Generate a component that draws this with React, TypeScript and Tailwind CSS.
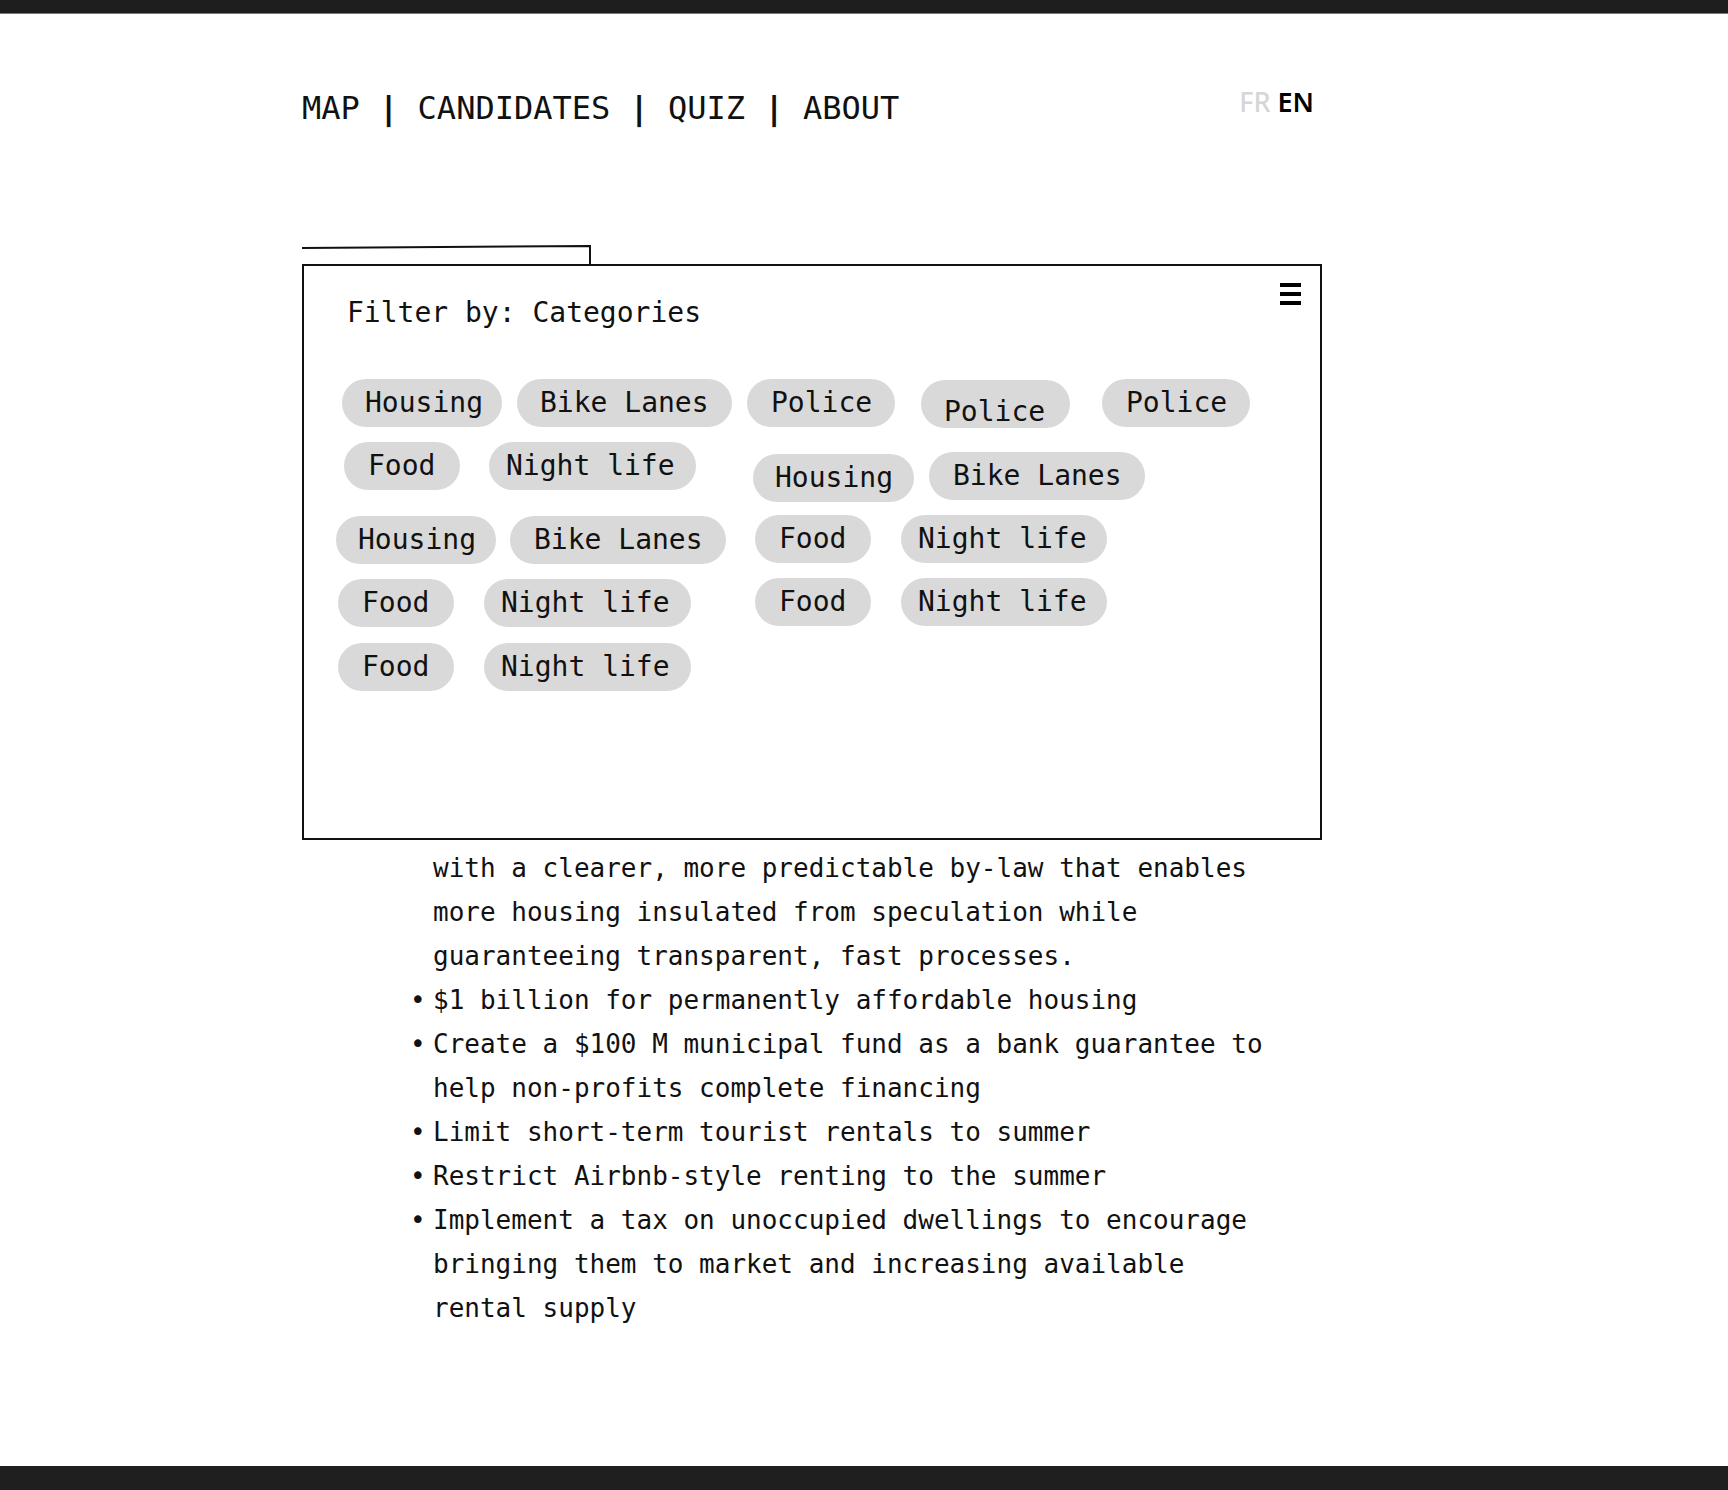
import React from 'react'

type ChipProps = { label: string; w: string; pl?: string; className?: string; low?: boolean }

function Chip({ label, w, pl = 'pl-[23px]', className = '', low = false }: ChipProps) {
  return (
    <div
      className={`h-12 shrink-0 rounded-full bg-[#d9d9d9] text-[28px] text-[#111] whitespace-nowrap ${w} ${pl} ${low ? 'leading-[64px]' : 'leading-[48px]'} ${className}`}
    >
      {label}
    </div>
  )
}

export default function App() {
  const bullets = [
    '$1 billion for permanently affordable housing',
    'Create a $100 M municipal fund as a bank guarantee to help non-profits complete financing',
    'Limit short-term tourist rentals to summer',
    'Restrict Airbnb-style renting to the summer',
    'Implement a tax on unoccupied dwellings to encourage bringing them to market and increasing available rental supply',
  ]

  return (
    <div className="h-[1490px] bg-white flex flex-col font-['DejaVu_Sans_Mono',monospace] text-[#111]">
      {/* top bar */}
      <div className="h-[14px] bg-[#1e1e1e] border-b border-[#777] shrink-0" />

      <div className="pl-[302px]">
        <div className="w-[1020px]">
          {/* nav */}
          <div className="mt-[74px] flex justify-between items-start">
            <nav className="text-[32px] leading-[40px] whitespace-pre">
              <span>MAP</span> <span className="font-bold">|</span> <span>CANDIDATES</span>{' '}
              <span className="font-bold">|</span> <span>QUIZ</span> <span className="font-bold">|</span>{' '}
              <span>ABOUT</span>
            </nav>
            <div className="-mt-[2px] pr-[8px] text-[27px] leading-[32px] font-medium font-['Noto_Sans',sans-serif]">
              <span className="text-[#d6d6d6]">FR</span> <span className="text-black font-semibold">EN</span>
            </div>
          </div>

          {/* folder tab */}
          <svg className="mt-[117px] block" width="290" height="19" viewBox="0 0 290 19">
            <polyline points="0,3 288,1 288,19" fill="none" stroke="#111" strokeWidth="2" />
          </svg>

          {/* filter panel */}
          <div className="h-[576px] border-2 border-[#111] bg-white flex flex-col">
            <div className="pt-[17px] pl-[43px] pr-[19px] flex justify-between items-start">
              <div className="mt-[12px] text-[28px] leading-[36px]">Filter by: Categories</div>
              <div className="flex flex-col gap-[5.5px]">
                <div className="h-[3.5px] w-[21px] bg-black" />
                <div className="h-[3.5px] w-[21px] bg-black" />
                <div className="h-[3.5px] w-[21px] bg-black" />
              </div>
            </div>

            {/* first row */}
            <div className="mt-[48px] flex items-start">
              <Chip label="Housing" w="w-[160px]" className="ml-[38px]" />
              <Chip label="Bike Lanes" w="w-[215px]" className="ml-[15px]" />
              <Chip label="Police" w="w-[148px]" className="ml-[15px]" pl="pl-[24px]" />
              <Chip label="Police" w="w-[149px]" className="ml-[26px] mt-[1px]" pl="pl-[23px]" low />
              <Chip label="Police" w="w-[148px]" className="ml-[32px]" pl="pl-[24px]" />
            </div>

            {/* two clusters */}
            <div className="flex items-start">
              <div className="w-[440px] flex flex-col">
                <div className="mt-[14px] flex">
                  <Chip label="Food" w="w-[116px]" className="ml-[40px]" pl="pl-[24px]" />
                  <Chip label="Night life" w="w-[207px]" className="ml-[29px]" pl="pl-[17px]" />
                </div>
                <div className="mt-[26px] flex">
                  <Chip label="Housing" w="w-[160px]" className="ml-[32px]" pl="pl-[22px]" />
                  <Chip label="Bike Lanes" w="w-[216px]" className="ml-[14px]" pl="pl-[24px]" />
                </div>
                <div className="mt-[15px] flex">
                  <Chip label="Food" w="w-[116px]" className="ml-[34px]" pl="pl-[24px]" />
                  <Chip label="Night life" w="w-[207px]" className="ml-[30px]" pl="pl-[17px]" />
                </div>
                <div className="mt-[16px] flex">
                  <Chip label="Food" w="w-[116px]" className="ml-[34px]" pl="pl-[24px]" />
                  <Chip label="Night life" w="w-[207px]" className="ml-[30px]" pl="pl-[17px]" />
                </div>
              </div>

              <div className="flex flex-col">
                <div className="mt-[24px] flex items-start">
                  <Chip label="Housing" w="w-[161px]" className="ml-[9px] mt-[2px]" pl="pl-[22px]" />
                  <Chip label="Bike Lanes" w="w-[216px]" className="ml-[15px]" pl="pl-[24px]" />
                </div>
                <div className="mt-[13px] flex">
                  <Chip label="Food" w="w-[116px]" className="ml-[11px]" pl="pl-[24px]" />
                  <Chip label="Night life" w="w-[206px]" className="ml-[30px]" pl="pl-[17px]" />
                </div>
                <div className="mt-[15px] flex">
                  <Chip label="Food" w="w-[116px]" className="ml-[11px]" pl="pl-[24px]" />
                  <Chip label="Night life" w="w-[206px]" className="ml-[30px]" pl="pl-[17px]" />
                </div>
              </div>
            </div>
          </div>

          {/* platform text */}
          <div className="mt-[6px] pl-[131px] text-[26px] leading-[44px]">
            <p className="w-[838px]">
              with a clearer, more predictable by-law that enables more housing insulated from speculation while
              guaranteeing transparent, fast processes.
            </p>
            <ul>
              {bullets.map((b, i) => (
                <li key={i} className="flex -ml-[23px]">
                  <span className="w-[23px] shrink-0">•</span>
                  <span className="w-[838px]">{b}</span>
                </li>
              ))}
            </ul>
          </div>
        </div>
      </div>

      {/* bottom bar */}
      <div className="mt-auto h-[24px] bg-[#1f1f1f] shrink-0" />
    </div>
  )
}
